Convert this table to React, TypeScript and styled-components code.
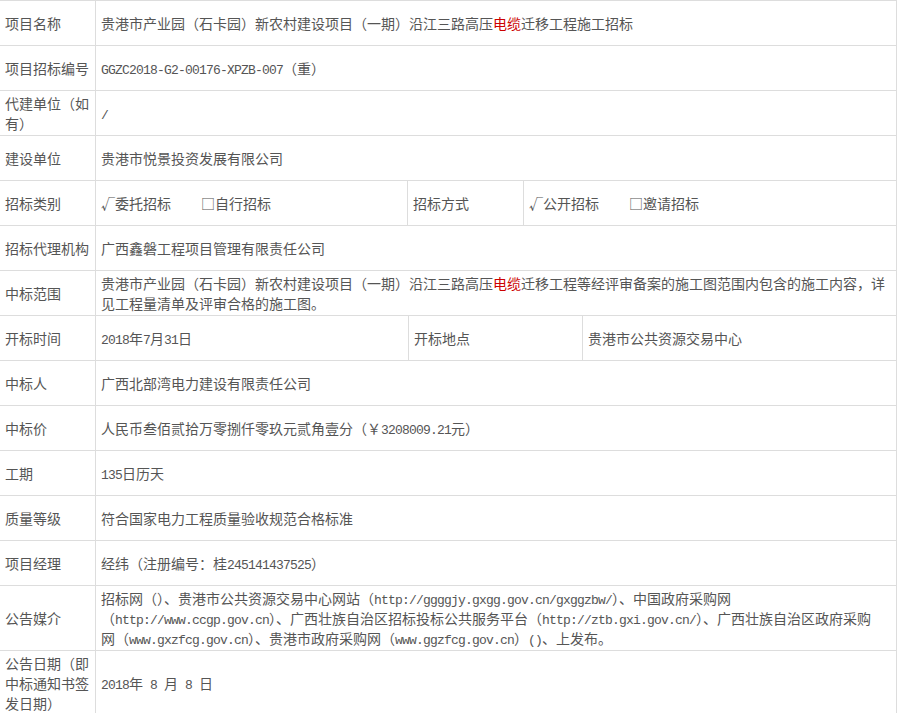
import { createGlobalStyle } from 'styled-components';
import styled from 'styled-components';

const GlobalStyle = createGlobalStyle`
  html, body {
    margin: 0;
    padding: 0;
    background: #fff;
  }
  body {
    font-family: 'Noto Sans CJK SC', 'Microsoft YaHei', sans-serif;
    font-size: 14px;
    color: #555;
  }
`;

const Table = styled.div`
  width: 897px;
  border-top: 1px solid #ddd;
  border-right: 1px solid #ddd;
  box-sizing: border-box;
`;

const Row = styled.div<{ $cols?: string }>`
  display: grid;
  grid-template-columns: ${(p) => p.$cols ?? '95px 1fr'};
  min-height: 45px;
  border-bottom: 1px solid #ddd;
  box-sizing: border-box;
`;

const Cell = styled.div<{ $first?: boolean }>`
  display: flex;
  align-items: center;
  padding: 2px 5px;
  line-height: 20px;
  border-left: ${(p) => (p.$first ? 'none' : '1px solid #ddd')};
  box-sizing: border-box;
`;

const Label = styled(Cell).attrs({ $first: true })``;

const Text = styled.div`
  width: 100%;
`;

const Line = styled.span`
  display: block;
  white-space: nowrap;
`;

// latin runs were set in a song-style face, 7px per char
const Lat = styled.span`
  font-family: 'Liberation Mono', monospace;
  font-size: 13px;
  letter-spacing: -0.8px;
  line-height: 1;
  white-space: pre;
`;

const Red = styled.span`
  color: #c00;
`;

const Option = styled.span`
  margin-right: 30px;
`;

const Mark = styled.span`
  font-family: 'Noto Sans CJK SC', sans-serif;
  line-height: 1;
`;

const TWO_FOUR_A = '95px 312px 116px 1fr';
const TWO_FOUR_B = '95px 313px 174px 1fr';

export default function App() {
  return (
    <>
      <GlobalStyle />
      <Table>
        <Row>
          <Label>项目名称</Label>
          <Cell>
            <Text>
              贵港市产业园（石卡园）新农村建设项目（一期）沿江三路高压<Red>电缆</Red>迁移工程施工招标
            </Text>
          </Cell>
        </Row>
        <Row>
          <Label>项目招标编号</Label>
          <Cell>
            <Text>
              <Lat>GGZC2018-G2-00176-XPZB-007</Lat>（重）
            </Text>
          </Cell>
        </Row>
        <Row>
          <Label>代建单位（如有）</Label>
          <Cell>
            <Text>
              <Lat>/</Lat>
            </Text>
          </Cell>
        </Row>
        <Row>
          <Label>建设单位</Label>
          <Cell>
            <Text>贵港市悦景投资发展有限公司</Text>
          </Cell>
        </Row>
        <Row $cols={TWO_FOUR_A}>
          <Label>招标类别</Label>
          <Cell>
            <Text>
              <Option>
                <Mark>√</Mark>委托招标
              </Option>
              <span>
                <Mark>□</Mark>自行招标
              </span>
            </Text>
          </Cell>
          <Cell>招标方式</Cell>
          <Cell>
            <Text>
              <Option>
                <Mark>√</Mark>公开招标
              </Option>
              <span>
                <Mark>□</Mark>邀请招标
              </span>
            </Text>
          </Cell>
        </Row>
        <Row>
          <Label>招标代理机构</Label>
          <Cell>
            <Text>广西鑫磐工程项目管理有限责任公司</Text>
          </Cell>
        </Row>
        <Row>
          <Label>中标范围</Label>
          <Cell>
            <Text>
              贵港市产业园（石卡园）新农村建设项目（一期）沿江三路高压<Red>电缆</Red>迁移工程等经评审备案的施工图范围内包含的施工内容，详见工程量清单及评审合格的施工图。
            </Text>
          </Cell>
        </Row>
        <Row $cols={TWO_FOUR_B}>
          <Label>开标时间</Label>
          <Cell>
            <Text>
              <Lat>2018</Lat>年<Lat>7</Lat>月<Lat>31</Lat>日
            </Text>
          </Cell>
          <Cell>开标地点</Cell>
          <Cell>
            <Text>贵港市公共资源交易中心</Text>
          </Cell>
        </Row>
        <Row>
          <Label>中标人</Label>
          <Cell>
            <Text>广西北部湾电力建设有限责任公司</Text>
          </Cell>
        </Row>
        <Row>
          <Label>中标价</Label>
          <Cell>
            <Text>
              人民币叁佰贰拾万零捌仟零玖元贰角壹分（￥<Lat>3208009.21</Lat>元）
            </Text>
          </Cell>
        </Row>
        <Row>
          <Label>工期</Label>
          <Cell>
            <Text>
              <Lat>135</Lat>日历天
            </Text>
          </Cell>
        </Row>
        <Row>
          <Label>质量等级</Label>
          <Cell>
            <Text>符合国家电力工程质量验收规范合格标准</Text>
          </Cell>
        </Row>
        <Row>
          <Label>项目经理</Label>
          <Cell>
            <Text>
              经纬（注册编号：桂<Lat>245141437525</Lat>）
            </Text>
          </Cell>
        </Row>
        <Row>
          <Label>公告媒介</Label>
          <Cell>
            <Text>
              <Line>
                招标网（）、贵港市公共资源交易中心网站（<Lat>http://ggggjy.gxgg.gov.cn/gxggzbw/</Lat>）、中国政府采购网
              </Line>
              <Line>
                （<Lat>http://www.ccgp.gov.cn</Lat>）、广西壮族自治区招标投标公共服务平台（<Lat>http://ztb.gxi.gov.cn/</Lat>）、广西壮族自治区政府采购
              </Line>
              <Line>
                网（<Lat>www.gxzfcg.gov.cn</Lat>）、贵港市政府采购网（<Lat>www.ggzfcg.gov.cn</Lat>）<Lat>()</Lat>、上发布。
              </Line>
            </Text>
          </Cell>
        </Row>
        <Row>
          <Label>公告日期（即中标通知书签发日期）</Label>
          <Cell>
            <Text>
              <Lat>2018</Lat>年<Lat>{' 8 '}</Lat>月<Lat>{' 8 '}</Lat>日
            </Text>
          </Cell>
        </Row>
      </Table>
    </>
  );
}
